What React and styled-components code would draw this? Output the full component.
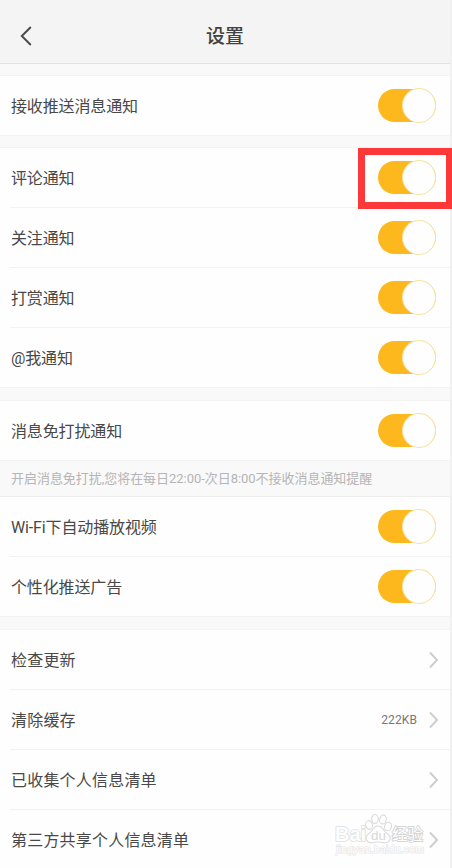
import React from 'react';
import styled, { createGlobalStyle } from 'styled-components';

const GlobalStyle = createGlobalStyle`
  * { box-sizing: border-box; }
  body {
    margin: 0;
    overflow: hidden;
    background: #f1f1f1;
    font-family: Roboto, "Noto Sans CJK SC", sans-serif;
  }
`;

const Screen = styled.main`
  position: relative;
  width: 452px;
  height: 868px;
  overflow: hidden;
  padding-right: 2px;
  background: #f1f1f1;
`;

const Header = styled.header`
  display: grid;
  grid-template-columns: 50px 1fr 50px;
  align-items: center;
  height: 64px;
  padding-top: 9px;
  background: #f4f4f4;
  border-bottom: 1px solid #e2e2e2;
`;

const BackButton = styled.button`
  display: flex;
  padding: 0 0 0 20px;
  border: 0;
  background: none;
`;

const Title = styled.h1`
  margin: 0;
  padding-top: 2px;
  text-align: center;
  font-size: 19px;
  line-height: 28px;
  font-weight: 500;
  color: #424242;
`;

const Gap = styled.div`
  height: ${(p) => p.$height}px;
  background: #f9f9f9;
  border-bottom: 1px solid #f3f3f3;
`;

const Group = styled.section`
  background: #fefefe;
`;

const Row = styled.div`
  display: flex;
  align-items: center;
  justify-content: space-between;
  height: 60px;
  margin-left: 10px;
  padding: 0 14px 0 1px;
  border-bottom: 1px solid #f1f2f2;
  &:last-child {
    margin-left: 0;
    padding-left: 11px;
  }
`;

const Label = styled.span`
  padding-top: 2px;
  font-size: 16px;
  line-height: 24px;
  letter-spacing: ${(p) => p.$spacing}px;
  color: #484848;
  white-space: nowrap;
`;

const Hint = styled.p`
  margin: 0;
  height: 36px;
  padding-left: 11px;
  font-size: 13px;
  line-height: 36px;
  letter-spacing: -0.04px;
  color: #b5b5b5;
  background: #f9f9f9;
  border-bottom: 1px solid #eeeeee;
  white-space: nowrap;
`;

const Track = styled.span`
  display: flex;
  justify-content: flex-end;
  align-items: center;
  width: 58px;
  height: 33px;
  border-radius: 17px;
  background: #fdb81e;
`;

const Knob = styled.span`
  flex: none;
  width: 34px;
  height: 35px;
  border-radius: 50%;
  border: 1px solid #f7e3a4;
  background: #fefefe;
`;

const Trailing = styled.span`
  display: flex;
  align-items: center;
  gap: 11px;
  margin-right: -4px;
`;

const Size = styled.span`
  padding-top: 1px;
  font-size: 12px;
  letter-spacing: 0.1px;
  color: #777777;
`;

const Highlight = styled.div`
  position: absolute;
  left: 358px;
  top: 148px;
  width: 94px;
  height: 61px;
  border: 7px solid #fd3838;
  border-right-width: 6px;
`;

const Watermark = styled.div`
  position: absolute;
  left: 334px;
  top: 813px;
  width: 92px;
  height: 45px;
`;

function Toggle() {
  return <Track><Knob /></Track>;
}

function Chevron() {
  return (
    <svg width="12" height="18" viewBox="0 0 12 18" fill="none" stroke="#cdcdcd" strokeWidth="1.9">
      <path d="M2 1.5 L9 9 L2 16.5" />
    </svg>
  );
}

function ToggleRow({ label }) {
  return (
    <Row>
      <Label $spacing={-0.13}>{label}</Label>
      <Toggle />
    </Row>
  );
}

function LinkRow({ label, value }) {
  return (
    <Row>
      <Label $spacing={0.2}>{label}</Label>
      <Trailing>
        {value && <Size>{value}</Size>}
        <Chevron />
      </Trailing>
    </Row>
  );
}

function BaiduMark() {
  return (
    <Watermark>
      <svg width="92" height="45" viewBox="0 0 92 45" fontFamily='"Liberation Sans", "Noto Sans CJK SC", sans-serif'>
        <text x="1" y="28" fontSize="20" fontWeight="700" textLength="31" lengthAdjust="spacingAndGlyphs" fill="#fefefe" stroke="#dedede" strokeWidth="1.6" paintOrder="stroke">Bai</text>
        <g fill="#fefefe" stroke="#dadada" strokeWidth="1.1">
          <ellipse cx="35" cy="12" rx="3.4" ry="4.4" transform="rotate(-15 35 12)" />
          <ellipse cx="41" cy="6" rx="3.3" ry="4.5" />
          <ellipse cx="49" cy="6.5" rx="3.3" ry="4.5" transform="rotate(12 49 6.5)" />
          <ellipse cx="54" cy="13.5" rx="3.4" ry="4.3" transform="rotate(18 54 13.5)" />
          <path d="M44 13 C39 13 39 18 35 20.5 C29 24 33 31 39 29.5 Q44 28.5 49 29.5 C56 31 59 24 53 20.5 C49 18 49 13 44 13Z" />
        </g>
        <text x="37" y="27" fontSize="13" fill="#d8d8d8" textLength="15" lengthAdjust="spacingAndGlyphs">du</text>
        <text x="58" y="27" fontSize="15.5" fill="#fefefe" stroke="#d6d6d6" strokeWidth="1.8" paintOrder="stroke">经验</text>
        <text x="2" y="40" fontSize="10.5" textLength="88" fill="#fefefe" stroke="#e6e6e6" strokeWidth="1.2" paintOrder="stroke">jingyan.baidu.com</text>
      </svg>
    </Watermark>
  );
}

export default function App() {
  return (
    <>
      <GlobalStyle />
      <Screen>
        <Header>
          <BackButton aria-label="返回">
            <svg width="12" height="20" viewBox="0 0 12 20" fill="none" stroke="#484848" strokeWidth="1.9">
              <path d="M10.8 1 L1.8 10 L10.8 19" />
            </svg>
          </BackButton>
          <Title>设置</Title>
        </Header>
        <Gap $height={12} />
        <Group>
          <ToggleRow label="接收推送消息通知" />
        </Group>
        <Gap $height={12} />
        <Group>
          <ToggleRow label="评论通知" />
          <ToggleRow label="关注通知" />
          <ToggleRow label="打赏通知" />
          <ToggleRow label="@我通知" />
        </Group>
        <Gap $height={13} />
        <Group>
          <ToggleRow label="消息免打扰通知" />
        </Group>
        <Hint>开启消息免打扰,您将在每日22:00-次日8:00不接收消息通知提醒</Hint>
        <Group>
          <ToggleRow label="Wi-Fi下自动播放视频" />
          <ToggleRow label="个性化推送广告" />
        </Group>
        <Gap $height={13} />
        <Group>
          <LinkRow label="检查更新" />
          <LinkRow label="清除缓存" value="222KB" />
          <LinkRow label="已收集个人信息清单" />
          <LinkRow label="第三方共享个人信息清单" />
        </Group>
        <Highlight />
        <BaiduMark />
      </Screen>
    </>
  );
}
